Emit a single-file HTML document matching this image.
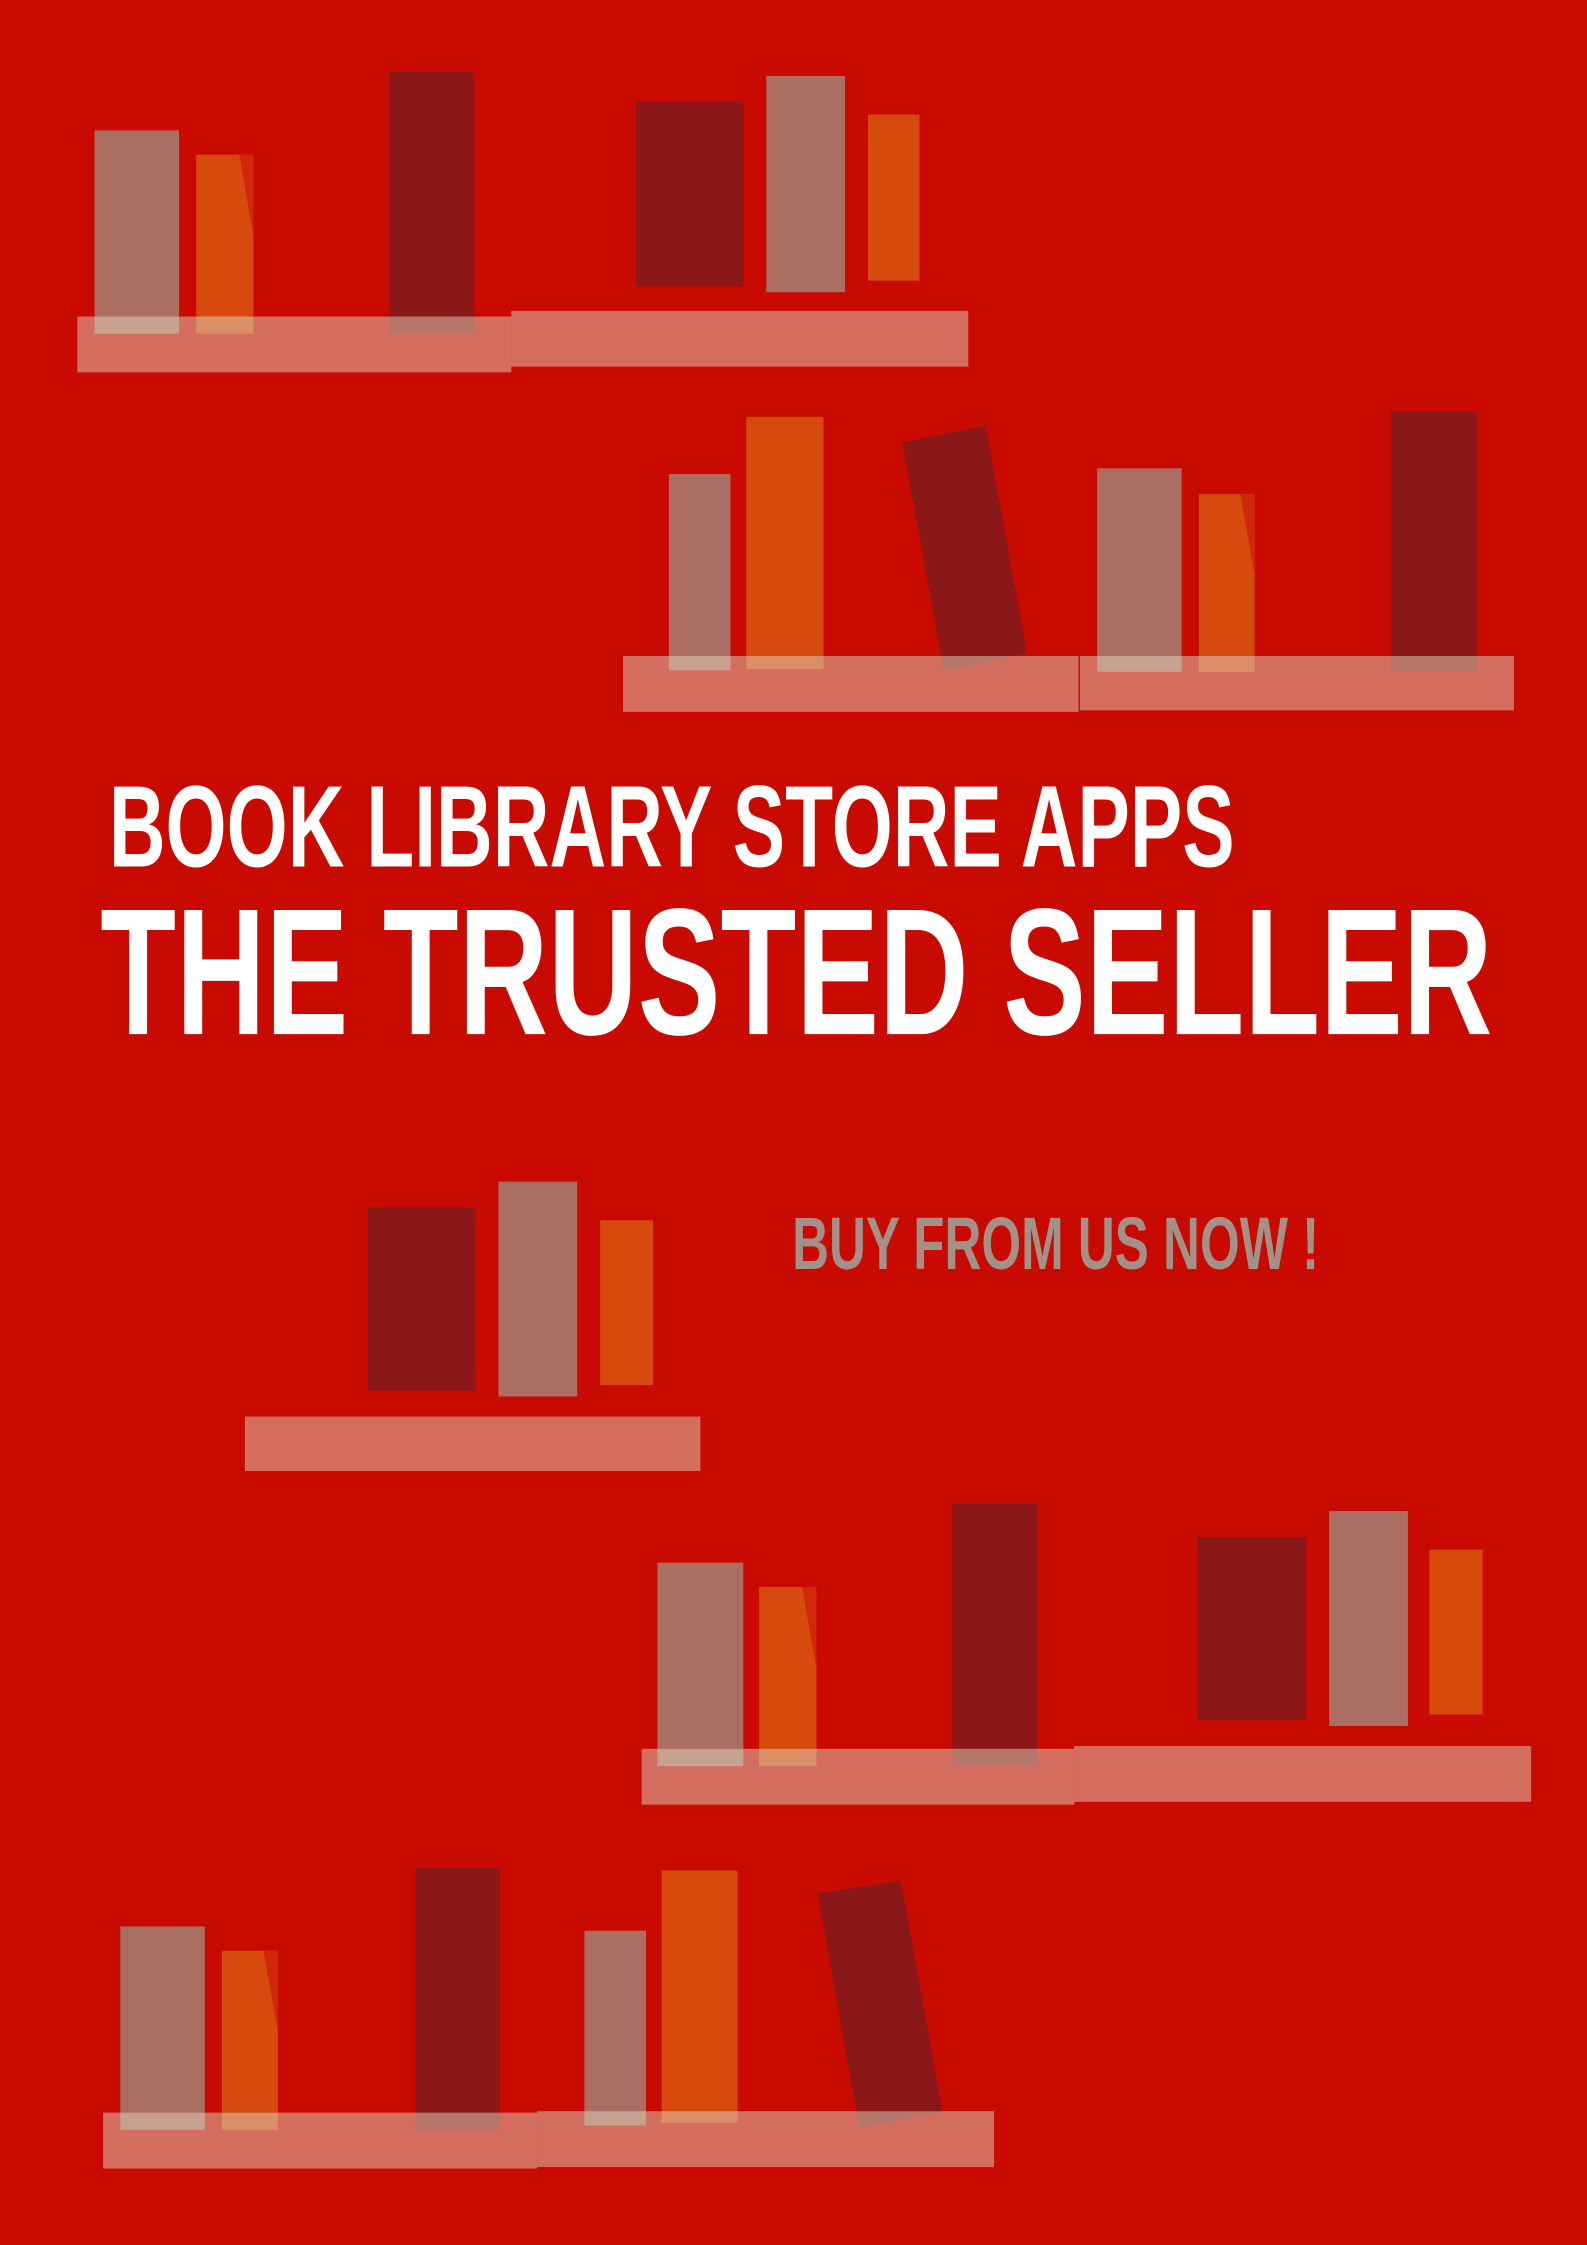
<!DOCTYPE html>
<html><head><meta charset="utf-8"><style>
html,body{margin:0;padding:0;background:#c80a00;}
svg{display:block;}
text{font-family:"Liberation Sans Narrow","Liberation Sans",sans-serif;font-weight:bold;}
</style></head><body>
<svg width="1587" height="2245" viewBox="0 0 1108 1567.4" preserveAspectRatio="none" xmlns="http://www.w3.org/2000/svg">
<rect x="0" y="0" width="1108" height="1568" fill="#c80a00"/>
<defs>
<g id="x"></g>
</defs>
<!-- Group A -->
<rect x="66" y="91" width="59" height="142" fill="#ab6e62"/>
<rect x="137" y="108" width="40" height="125" fill="#d64a0e"/>
<polygon points="167,108 177,108 177,165" fill="#d02808"/>
<rect x="272" y="50" width="59" height="183" fill="#8a1818"/>
<rect x="54" y="221" width="303" height="39" fill="rgb(223,210,188)" fill-opacity="0.51"/>
<!-- Group B -->
<rect x="444" y="71" width="75" height="129" fill="#8a1818"/>
<rect x="535" y="53" width="55" height="151" fill="#ab6e62"/>
<rect x="606" y="80" width="36" height="116" fill="#d64a0e"/>
<rect x="357" y="217" width="319" height="39" fill="rgb(223,210,188)" fill-opacity="0.51"/>
<!-- Group C -->
<rect x="467" y="331" width="43" height="137" fill="#ab6e62"/>
<rect x="521" y="291" width="54" height="176" fill="#d64a0e"/>
<polygon points="630,309 688,297 717,456 659,468" fill="#8a1818"/>
<rect x="435" y="458" width="318" height="39" fill="rgb(223,210,188)" fill-opacity="0.51"/>
<!-- Group D -->
<rect x="766" y="327" width="59" height="142" fill="#ab6e62"/>
<rect x="837" y="345" width="39" height="124" fill="#d64a0e"/>
<polygon points="866,345 876,345 876,402" fill="#d02808"/>
<rect x="971" y="287" width="60" height="182" fill="#8a1818"/>
<rect x="754" y="458" width="303" height="38" fill="rgb(223,210,188)" fill-opacity="0.51"/>
<!-- Group E -->
<rect x="257" y="843" width="75" height="128" fill="#8a1818"/>
<rect x="348" y="825" width="55" height="150" fill="#ab6e62"/>
<rect x="419" y="852" width="37" height="115" fill="#d64a0e"/>
<rect x="171" y="989" width="318" height="38" fill="rgb(223,210,188)" fill-opacity="0.51"/>
<!-- Group F -->
<rect x="459" y="1091" width="60" height="142" fill="#ab6e62"/>
<rect x="530" y="1108" width="40" height="125" fill="#d64a0e"/>
<polygon points="560,1108 570,1108 570,1165" fill="#d02808"/>
<rect x="665" y="1050" width="59" height="183" fill="#8a1818"/>
<rect x="448" y="1221" width="302" height="39" fill="rgb(223,210,188)" fill-opacity="0.51"/>
<!-- Group G -->
<rect x="836" y="1073" width="76" height="128" fill="#8a1818"/>
<rect x="928" y="1055" width="55" height="150" fill="#ab6e62"/>
<rect x="998" y="1082" width="37" height="115" fill="#d64a0e"/>
<rect x="750" y="1219" width="319" height="39" fill="rgb(223,210,188)" fill-opacity="0.51"/>
<!-- Group H -->
<rect x="84" y="1345" width="59" height="142" fill="#ab6e62"/>
<rect x="155" y="1362" width="39" height="125" fill="#d64a0e"/>
<polygon points="184,1362 194,1362 194,1419" fill="#d02808"/>
<rect x="290" y="1304" width="59" height="183" fill="#8a1818"/>
<rect x="72" y="1475" width="303" height="39" fill="rgb(223,210,188)" fill-opacity="0.51"/>
<!-- Group I -->
<rect x="408" y="1348" width="43" height="136" fill="#ab6e62"/>
<rect x="462" y="1306" width="53" height="176" fill="#d64a0e"/>
<polygon points="571,1322 629,1313 658,1474 600,1486" fill="#8a1818"/>
<rect x="375" y="1474" width="319" height="39" fill="rgb(223,210,188)" fill-opacity="0.51"/>
<!-- Text -->
<text x="76" y="605" font-size="81" fill="#ffffff" textLength="786" lengthAdjust="spacingAndGlyphs">BOOK LIBRARY STORE APPS</text>
<text x="70" y="722" font-size="126" fill="#ffffff" textLength="972" lengthAdjust="spacingAndGlyphs">THE TRUSTED SELLER</text>
<text x="553" y="886" font-size="52" fill="#a39089" textLength="368" lengthAdjust="spacingAndGlyphs">BUY FROM US NOW !</text>
</svg>
</body></html>
